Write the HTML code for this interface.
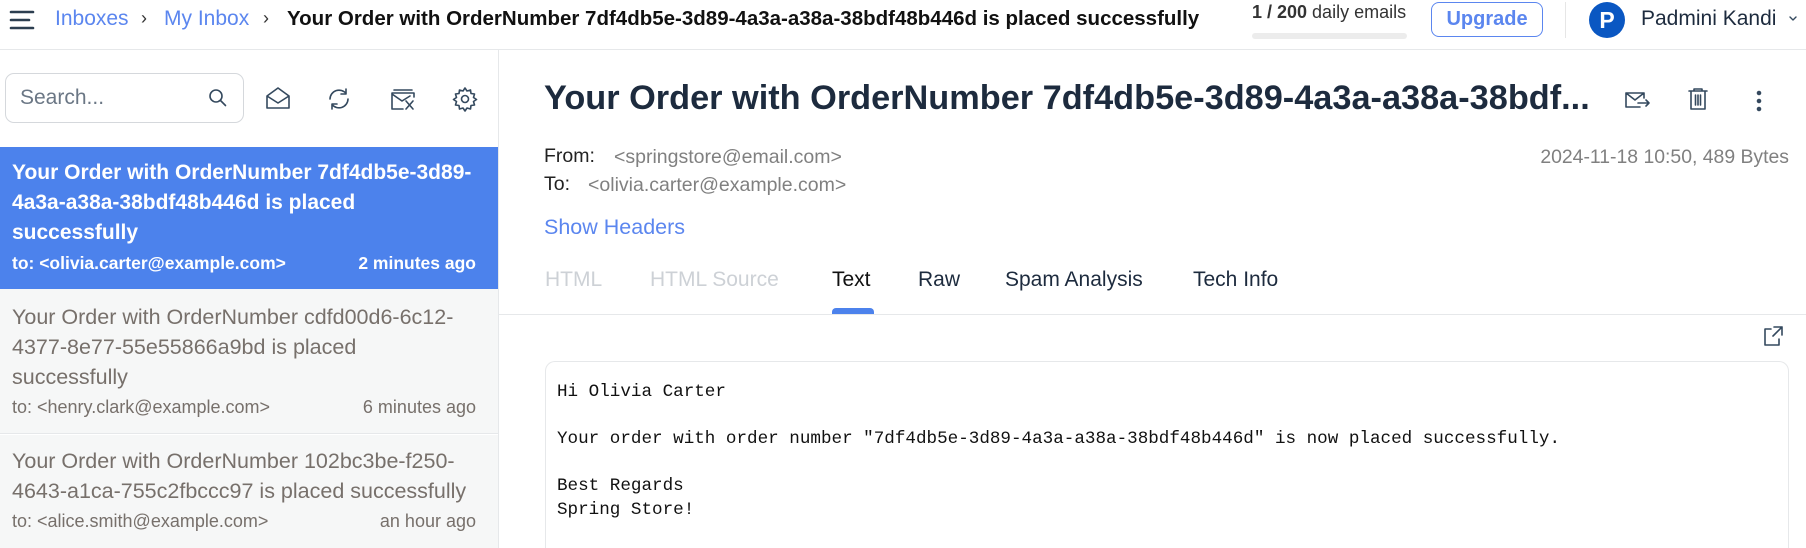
<!DOCTYPE html>
<html style="overflow:hidden;height:548px"><head><meta charset="utf-8"><style>
*{box-sizing:border-box;margin:0;padding:0}
body{width:1806px;height:548px;overflow:hidden;background:#fff;font-family:"Liberation Sans",sans-serif;position:relative;color:#1d2b3e}
.a{position:absolute;white-space:nowrap}
svg{position:absolute;fill:none;stroke:#34495e;stroke-width:1.6;stroke-linecap:round;stroke-linejoin:round}
</style></head><body>
<!-- header -->
<div class="a" style="left:0;top:49px;width:1806px;height:1px;background:#e6e8ea"></div>
<svg style="left:9px;top:9px" width="26" height="22" viewBox="0 0 26 22"><path d="M2 3h22M2 11h18M2 19h22" stroke="#2c3e50" stroke-width="2.6"/></svg>
<div class="a" style="left:55px;top:7px;font-size:21px;color:#5b86ef">Inboxes</div>
<div class="a" style="left:141px;top:8px;font-size:18px;color:#333">›</div>
<div class="a" style="left:164px;top:7px;font-size:21px;color:#5b86ef">My Inbox</div>
<div class="a" style="left:263px;top:8px;font-size:18px;color:#333">›</div>
<div class="a" style="left:287px;top:7px;font-size:20.5px;font-weight:bold;color:#111">Your Order with OrderNumber 7df4db5e-3d89-4a3a-a38a-38bdf48b446d is placed successfully</div>
<div class="a" style="left:1252px;top:2px;font-size:18px;color:#333"><b>1 / 200</b> daily emails</div>
<div class="a" style="left:1252px;top:33px;width:155px;height:6px;border-radius:3px;background:#ececec"></div>
<div class="a" style="left:1431px;top:2px;width:112px;height:35px;border:1.5px solid #5b86ef;border-radius:8px;color:#5b86ef;font-size:20px;font-weight:bold;text-align:center;line-height:32px">Upgrade</div>
<div class="a" style="left:1565px;top:2px;width:1px;height:36px;background:#e6e6e6"></div>
<div class="a" style="left:1589px;top:2px;width:36px;height:36px;border-radius:50%;background:#0a57c2;color:#fff;font-weight:bold;font-size:23px;text-align:center;line-height:36px">P</div>
<div class="a" style="left:1641px;top:7px;font-size:21px;color:#1d2b3e">Padmini Kandi</div>
<svg style="left:1788px;top:15px" width="10" height="8" viewBox="0 0 10 8"><path d="M2 2l3 3 3-3" stroke-width="1.4"/></svg>
<!-- sidebar -->
<div class="a" style="left:498px;top:50px;width:1px;height:498px;background:#e6e8ea"></div>
<div class="a" style="left:5px;top:73px;width:239px;height:50px;border:1px solid #d5d8dc;border-radius:9px"></div>
<div class="a" style="left:20px;top:86px;font-size:21px;color:#6b7785">Search...</div>
<svg style="left:208px;top:88px" width="20" height="20" viewBox="0 0 20 20"><circle cx="8" cy="8" r="6"/><path d="M12.5 12.5l5 5"/></svg>
<svg style="left:265px;top:86px" width="26" height="24" viewBox="0 0 26 24"><path d="M2 10l11-8 11 8v12H2z M2 10l11 7 11-7"/></svg>
<svg style="left:326px;top:86px" width="26" height="26" viewBox="0 0 26 26"><path d="M4 13a9 9 0 0 1 16-5.5M22 13a9 9 0 0 1-16 5.5M20 3v5h-5M6 23v-5h5"/></svg>
<svg style="left:389px;top:86px" width="28" height="26" viewBox="0 0 28 26"><path d="M5 4h18M3 7h22v4M3 7v16h11M3 8l10 7 8-5M17 15l7 8M24 15l-7 8"/></svg>
<svg style="left:452px;top:86px" width="26" height="26" viewBox="0 0 26 26"><circle cx="13" cy="13" r="3.5"/><path d="M13 2l2 3 3.5-1 .5 3.5 3.5.5-1 3.5 3 2-3 2 1 3.5-3.5.5-.5 3.5-3.5-1-2 3-2-3-3.5 1-.5-3.5-3.5-.5 1-3.5-3-2 3-2-1-3.5 3.5-.5.5-3.5 3.5 1z"/></svg>
<div class="a" style="left:0;top:147px;width:498px;height:142px;background:#4c82ec"></div>
<div class="a" style="left:12px;top:158px;font-size:21px;line-height:30px;color:#fff;font-weight:bold">Your Order with OrderNumber 7df4db5e-3d89-<br>4a3a-a38a-38bdf48b446d is placed<br>successfully</div>
<div class="a" style="left:12px;top:253px;font-size:17.5px;color:#fff;font-weight:bold">to: &lt;olivia.carter@example.com&gt;</div>
<div class="a" style="right:1330px;top:253px;font-size:17.5px;color:#fff;font-weight:bold">2 minutes ago</div>
<div class="a" style="left:0;top:289px;width:498px;height:145px;background:#f6f7f7;border-bottom:1px solid #e6e8ea"></div>
<div class="a" style="left:12px;top:302px;font-size:21.5px;line-height:30px;color:#77706b">Your Order with OrderNumber cdfd00d6-6c12-<br>4377-8e77-55e55866a9bd is placed<br>successfully</div>
<div class="a" style="left:12px;top:397px;font-size:18px;color:#77706b">to: &lt;henry.clark@example.com&gt;</div>
<div class="a" style="right:1330px;top:397px;font-size:18px;color:#77706b">6 minutes ago</div>
<div class="a" style="left:0;top:435px;width:498px;height:113px;background:#f6f7f7"></div>
<div class="a" style="left:12px;top:446px;font-size:21.5px;line-height:30px;color:#77706b">Your Order with OrderNumber 102bc3be-f250-<br>4643-a1ca-755c2fbccc97 is placed successfully</div>
<div class="a" style="left:12px;top:511px;font-size:18px;color:#77706b">to: &lt;alice.smith@example.com&gt;</div>
<div class="a" style="right:1330px;top:511px;font-size:18px;color:#77706b">an hour ago</div>
<!-- main -->
<div class="a" style="left:544px;top:79px;font-size:34.3px;font-weight:bold;color:#1d2b3e">Your Order with OrderNumber 7df4db5e-3d89-4a3a-a38a-38bdf...</div>
<svg style="left:1624px;top:89px" width="28" height="22" viewBox="0 0 28 22"><path d="M16 18H2V4h18v5M2 4l9 7 9-7M14 14h11M22 11l3 3-3 3"/></svg>
<svg style="left:1687px;top:87px" width="22" height="24" viewBox="0 0 22 24"><path d="M2 4h18M7 4V2h8v2M4 4v18h14V4M8.5 8v10M11 8v10M13.5 8v10"/></svg>
<svg style="left:1754px;top:89px" width="10" height="24" viewBox="0 0 10 24"><circle cx="5" cy="4" r="1.5" fill="#34495e"/><circle cx="5" cy="12" r="1.5" fill="#34495e"/><circle cx="5" cy="20" r="1.5" fill="#34495e"/></svg>
<div class="a" style="left:544px;top:145px;font-size:19.5px;color:#222">From:</div>
<div class="a" style="left:614px;top:146px;font-size:19.5px;color:#808080">&lt;springstore@email.com&gt;</div>
<div class="a" style="left:544px;top:173px;font-size:19.5px;color:#222">To:</div>
<div class="a" style="left:588px;top:174px;font-size:19.5px;color:#808080">&lt;olivia.carter@example.com&gt;</div>
<div class="a" style="right:17px;top:146px;font-size:19.4px;color:#808080">2024-11-18 10:50, 489 Bytes</div>
<div class="a" style="left:544px;top:215px;font-size:21.5px;color:#5b86ef">Show Headers</div>
<div class="a" style="left:545px;top:268px;font-size:21px;color:#cdd1d6">HTML</div>
<div class="a" style="left:650px;top:268px;font-size:21px;color:#cdd1d6">HTML Source</div>
<div class="a" style="left:832px;top:268px;font-size:21px;color:#111">Text</div>
<div class="a" style="left:918px;top:268px;font-size:21px;color:#1d2b3e">Raw</div>
<div class="a" style="left:1005px;top:268px;font-size:21px;color:#1d2b3e">Spam Analysis</div>
<div class="a" style="left:1193px;top:268px;font-size:21px;color:#1d2b3e">Tech Info</div>
<div class="a" style="left:499px;top:314px;width:1307px;height:1px;background:#e6e8ea"></div>
<div class="a" style="left:832px;top:308px;width:42px;height:6px;border-radius:4px 4px 0 0;background:#4c82ec"></div>
<svg style="left:1762px;top:325px" width="22" height="22" viewBox="0 0 22 22"><path d="M9 4H3v16h14v-6M12 2h8v8M20 2l-9 9"/></svg>
<div class="a" style="left:545px;top:361px;width:1244px;height:187px;border:1px solid #e6e8ea;border-bottom:none;border-radius:10px 10px 0 0"></div>
<pre class="a" style="left:557px;top:381px;white-space:pre;font-family:'Liberation Mono','DejaVu Sans Mono',monospace;font-size:17.6px;line-height:23.5px;color:#111">Hi Olivia Carter

Your order with order number "7df4db5e-3d89-4a3a-a38a-38bdf48b446d" is now placed successfully.

Best Regards
Spring Store!</pre>
</body></html>
